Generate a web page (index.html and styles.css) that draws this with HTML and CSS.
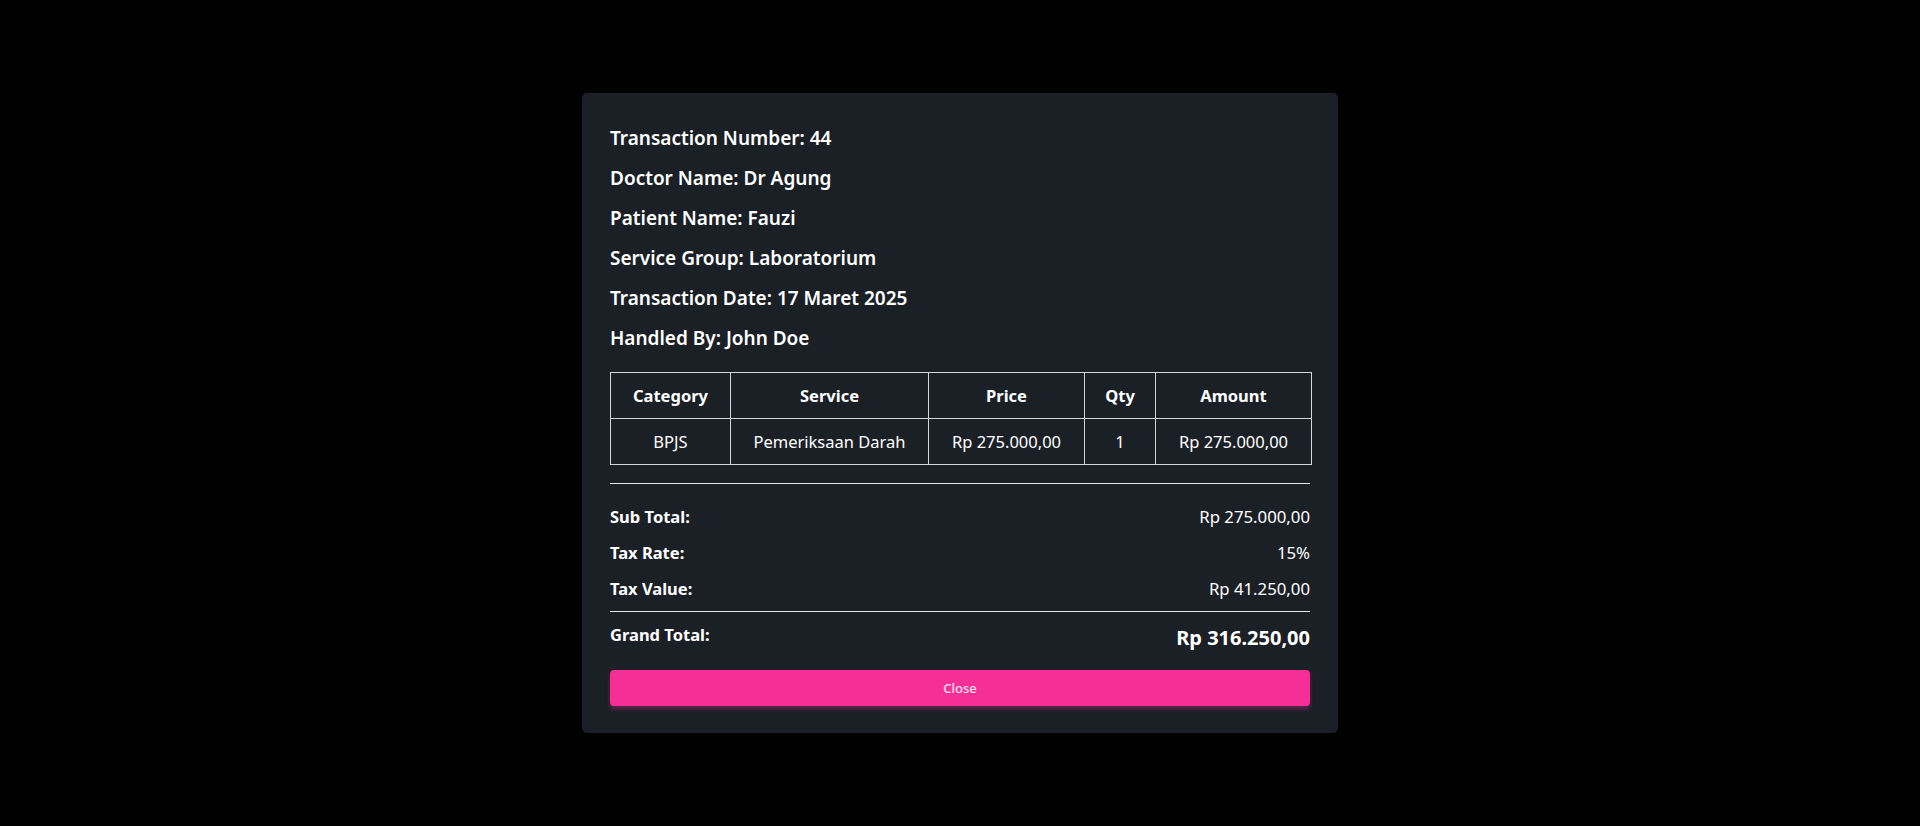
FILE: index.html
```html
<!DOCTYPE html>
<html lang="en">
<head>
<meta charset="utf-8">
<title>Transaction Detail</title>
<link rel="stylesheet" href="styles.css">
</head>
<body>
<div class="overlay">
  <div class="modal">
    <div class="info">
      <h5 class="info-line">Transaction Number: 44</h5>
      <h5 class="info-line">Doctor Name: Dr Agung</h5>
      <h5 class="info-line">Patient Name: Fauzi</h5>
      <h5 class="info-line">Service Group: Laboratorium</h5>
      <h5 class="info-line">Transaction Date: 17 Maret 2025</h5>
      <h5 class="info-line">Handled By: John Doe</h5>
    </div>
    <table class="items">
      <colgroup>
        <col class="c-cat"><col class="c-svc"><col class="c-price"><col class="c-qty"><col class="c-amt">
      </colgroup>
      <thead>
        <tr><th>Category</th><th>Service</th><th>Price</th><th>Qty</th><th>Amount</th></tr>
      </thead>
      <tbody>
        <tr><td>BPJS</td><td>Pemeriksaan Darah</td><td>Rp 275.000,00</td><td>1</td><td>Rp 275.000,00</td></tr>
      </tbody>
    </table>
    <hr class="rule rule-top">
    <div class="sum-row"><span class="sum-label">Sub Total:</span><span class="sum-value">Rp 275.000,00</span></div>
    <div class="sum-row"><span class="sum-label">Tax Rate:</span><span class="sum-value">15%</span></div>
    <div class="sum-row sum-row-last"><span class="sum-label">Tax Value:</span><span class="sum-value">Rp 41.250,00</span></div>
    <hr class="rule rule-bottom">
    <div class="grand-row"><span class="sum-label">Grand Total:</span><span class="grand-value">Rp 316.250,00</span></div>
    <button class="close-btn" type="button">Close</button>
  </div>
</div>
</body>
</html>
```
FILE: styles.css
```css
* { box-sizing: border-box; }
html, body {
  margin: 0;
  padding: 0;
  height: 100%;
  background: #000;
}
body {
  font-family: "Noto Sans", "Open Sans", sans-serif;
  color: #fff;
}
.overlay {
  height: 100%;
  display: flex;
  align-items: center;
  justify-content: center;
}
.modal {
  width: 756px;
  background: #1b1f26;
  border-radius: 5px;
  padding: 25px 28px 27px;
  display: flex;
  flex-direction: column;
}
.info { display: flex; flex-direction: column; }
.info-line {
  margin: 0;
  font-size: 19px;
  font-weight: 600;
  line-height: 40px;
  height: 40px;
}
.items {
  margin-top: 14px;
  width: 701px;
  border-collapse: collapse;
  table-layout: fixed;
  font-size: 16.5px;
}
.c-cat { width: 120px; }
.c-svc { width: 198px; }
.c-price { width: 156px; }
.c-qty { width: 71px; }
.c-amt { width: 156px; }
.items th, .items td {
  border: 1px solid #d2d5da;
  text-align: center;
  height: 46px;
  padding: 0 4px;
  line-height: 20px;
  white-space: nowrap;
}
.items th { font-weight: 700; font-size: 16.5px; }
.items td { font-weight: 400; }
.rule {
  border: 0;
  border-top: 1px solid #e6e6e6;
  margin: 0;
  height: 0;
}
.rule-top { margin-top: 18px; margin-bottom: 21px; }
.sum-row {
  display: flex;
  justify-content: space-between;
  font-size: 16.5px;
  line-height: 24px;
  height: 24px;
  margin-bottom: 12px;
}
.sum-row-last { margin-bottom: 0; }
.rule-bottom { margin-top: 10px; margin-bottom: 11px; }
.sum-label { font-weight: 700; }
.sum-value { font-weight: 400; font-size: 16.75px; }
.grand-row {
  display: flex;
  justify-content: space-between;
  align-items: flex-start;
  font-size: 16.5px;
  line-height: 24px;
}
.grand-value {
  font-size: 20px;
  font-weight: 700;
  line-height: 30px;
}
.close-btn {
  margin-top: 17px;
  height: 36px;
  width: 100%;
  border: 0;
  border-radius: 4px;
  background: #f52f96;
  color: #fde6f1;
  font-family: "Noto Sans", sans-serif;
  font-size: 13px;
  font-weight: 500;
  box-shadow: 0 3px 4px rgba(245, 47, 150, 0.35);
}
```
